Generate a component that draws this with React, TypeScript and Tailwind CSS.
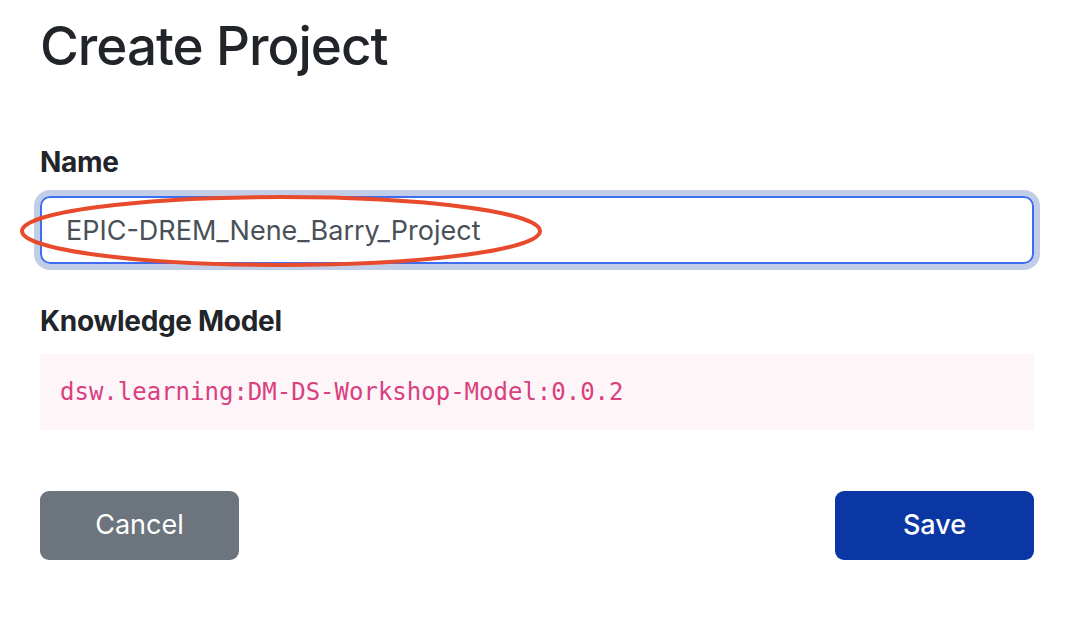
import React from 'react';

export default function App() {
  return (
    <main className="min-h-screen bg-white px-10 pt-[13px] text-[#212529]" style={{ fontFamily: 'Inter, "Noto Sans", sans-serif' }}>
      <h1 className="text-[53px] font-medium leading-[66px] tracking-[-1px]">Create Project</h1>

      <div className="mt-[66px] flex flex-col">
        <label className="text-[28px] font-bold leading-[34px] tracking-[-0.3px]">Name</label>
        <div className="relative mt-[17px] w-[994px]">
          <div className="rounded-[10px] border-2 border-[#3d6ef0] px-6 shadow-[0_0_0_6px_#c2cee8]">
            <input
              className="h-[64px] w-full bg-transparent text-[27px] text-[#495057] outline-none"
              defaultValue="EPIC-DREM_Nene_Barry_Project"
            />
          </div>
          {/* red annotation ring */}
          <svg className="pointer-events-none absolute left-[-20px] top-[-3px]" width="526" height="76" viewBox="0 0 526 76">
            <ellipse cx="261" cy="38" rx="259" ry="34" fill="none" stroke="#e84a2c" strokeWidth="4" />
          </svg>
        </div>

        <label className="mt-[40px] text-[28px] font-bold leading-[34px] tracking-[-0.3px]">Knowledge Model</label>
        <div className="mt-[16px] flex h-[76px] w-[994px] items-center bg-[#fdf5f7] px-5">
          <code className="text-[24px] text-[#d9407f]" style={{ fontFamily: '"DejaVu Sans Mono", "Liberation Mono", monospace' }}>
            dsw.learning:DM-DS-Workshop-Model:0.0.2
          </code>
        </div>

        <div className="mt-[61px] flex w-[994px] justify-between">
          <button className="h-[69px] w-[199px] rounded-[9px] bg-[#6c757d] text-[27px] text-white">Cancel</button>
          <button className="h-[69px] w-[199px] rounded-[9px] bg-[#0a37a3] text-[27px] font-medium text-white">Save</button>
        </div>
      </div>
    </main>
  );
}
